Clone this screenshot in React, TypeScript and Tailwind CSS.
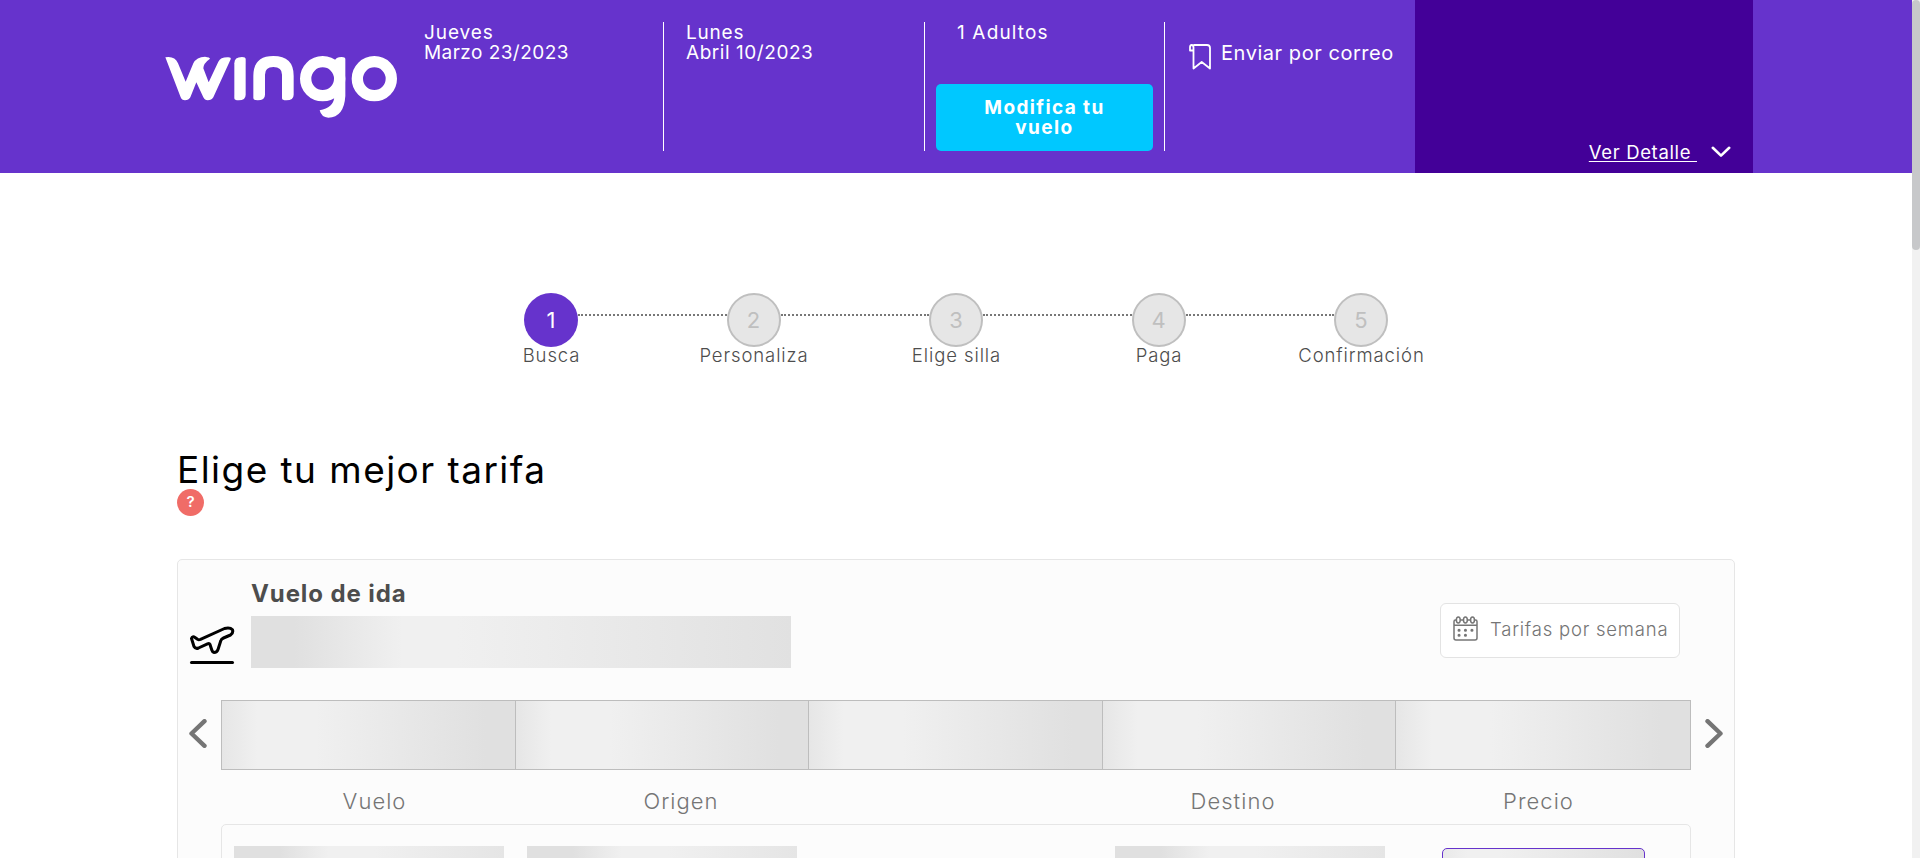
import React from "react";

const SKELETON = "bg-[linear-gradient(90deg,#e0e0e0_8%,#f0f0f0_28%,#f0f0f0_38%,#e1e1e1_100%)]";
const CELL = "bg-[linear-gradient(90deg,#e6e6e6_0%,#f0f0f0_12%,#f0f0f0_32%,#e0e0e0_90%)]";
const ROW = "bg-[linear-gradient(90deg,#e0e0e0_17%,#f0f0f0_35%,#f0f0f0_52%,#e5e5e5_100%)]";

function Logo() {
  return (
    <svg className="mt-[55px] h-16 w-[233px] shrink-0" viewBox="45 165 699 192" fill="#fff" role="img" aria-label="wingo">
      <path d="M46 172Q74 167 84 190L107 245L130 190Q140 170 165 170Q180 172 180 176Q160 190 160 205L176 247L205 185Q212 171 235 172Q244 172 242 178L190 292Q185 301 173 301Q164 301 160 292L139 247L121 292Q116 301 105 301Q95 301 92 292Z" />
      <path d="M253 190Q253 171 276 171Q287 171 287 177V284Q287 301 266 301Q253 301 253 295Z" />
      <path d="M310 227Q310 168 370 168Q431 168 431 227V284Q431 301 409 301Q396 301 396 295V224Q396 201 370 201Q345 201 345 224V284Q345 301 323 301Q310 301 310 295Z" />
      <circle cx="518" cy="236" r="51" fill="none" stroke="#fff" strokeWidth="34" />
      <path d="M553 184Q557 171 575 171Q586 171 586 177V288Q582 352 535 353Q514 352 509 331Q550 324 553 291Z" />
      <circle cx="673" cy="236" r="51" fill="none" stroke="#fff" strokeWidth="34" />
    </svg>
  );
}

function Chevron({ className, d }: { className: string; d: string }) {
  return (
    <svg className={className} viewBox="0 0 18 29" fill="none" stroke="#757575" strokeWidth="4.4" strokeLinecap="round" strokeLinejoin="round">
      <path d={d} />
    </svg>
  );
}

function Header() {
  return (
    <header className="flex h-[173px] bg-[#6633cc] pl-[165px] text-[19px] leading-5 text-white">
      <Logo />
      <div className="mt-[22px] h-[129px] w-[266px] border-r border-white pl-[26px] pt-px">
        <p className="tracking-[0.9px]">Jueves</p>
        <p className="tracking-[0.45px]">Marzo 23/2023</p>
      </div>
      <div className="mt-[22px] h-[129px] w-[261px] border-r border-white pl-[22px] pt-px">
        <p className="tracking-[0.8px]">Lunes</p>
        <p className="tracking-[0.55px]">Abril 10/2023</p>
      </div>
      <div className="mt-[22px] flex h-[129px] w-60 flex-col justify-between border-r border-white px-[11px] pt-px">
        <p className="pl-[21px] tracking-[1.15px]">1 Adultos</p>
        <button className="h-[67px] w-[217px] rounded-[5px] bg-[#00c8ff] px-10 font-bold leading-5 tracking-[1.4px]">Modifica tu vuelo</button>
      </div>
      <div className="flex w-[250px] items-start gap-[10px] pl-6 pt-[43px]">
        <svg className="mt-px h-[26px] w-[22px]" viewBox="0 0 22 26" fill="none" stroke="#fff" strokeWidth="1.8" strokeLinejoin="round">
          <path d="M4.5 1H18Q21 1 21 4V24.5L12.7 18L4.5 24.5V3.5Q4.5 1 2.7 1Q1 1 1 3.5V6.5H4" />
        </svg>
        <p className="whitespace-nowrap text-[20px] tracking-[0.55px]">Enviar por correo</p>
      </div>
      <div className="flex w-[338px] items-end justify-end gap-[14px] bg-[#430098] pb-[11px] pr-[22px] text-[18.5px]">
        <a className="whitespace-pre tracking-[0.65px] underline underline-offset-2">{"Ver Detalle "}</a>
        <svg className="mb-1 h-3 w-5" viewBox="0 0 20 12" fill="none" stroke="#fff" strokeWidth="2.6" strokeLinecap="round" strokeLinejoin="round">
          <path d="M1.8 1.8L10 9.6L18.2 1.8" />
        </svg>
      </div>
    </header>
  );
}

const steps = ["Busca", "Personaliza", "Elige silla", "Paga", "Confirmación"];

function Steps() {
  return (
    <ol className="ml-[524px] mt-[120px] flex h-[72px] w-[864px]">
      {steps.map((label, i) => (
        <React.Fragment key={label}>
          {i > 0 && <li className="mt-[21px] h-0 flex-1 border-t-2 border-dotted border-[#777]" />}
          <li className="flex w-[54px] flex-col items-center">
            <span
              className={
                "flex h-[54px] w-[54px] shrink-0 items-center justify-center rounded-full text-[22px] " +
                (i === 0 ? "bg-[#6633cc] text-white" : "border-2 border-[#bfbfbf] bg-[#e6e6e6] text-[#bfbfbf]")
              }
            >
              {i + 1}
            </span>
            <span className="-mt-px whitespace-nowrap pl-px text-[18.5px] font-light leading-[18px] tracking-[0.9px] text-[#4d4d4d]">{label}</span>
          </li>
        </React.Fragment>
      ))}
    </ol>
  );
}

function Plane() {
  return (
    <svg className="mt-[66px] h-[39px] w-[46px]" viewBox="0 0 46 39" fill="none" stroke="#000" strokeWidth="3" strokeLinecap="round" strokeLinejoin="round">
      <path d="M2.500 36.500H43.500" />
      <path d="M2.500 12.500Q3.500 9.800 6 11.500L8.500 13.300Q9.800 14 11.500 13.300L35.500 2.500Q41 1 43.500 3.800Q44.500 7 41.500 9L34.500 12Q32.200 13 31.700 15L29 23.500Q28 26.500 25 26.500Q23.500 26.300 22.800 24L21 18.500Q20.300 17 18.500 17.800L9.500 22Q6.500 23.200 5 20.500Z" />
    </svg>
  );
}

function Calendar() {
  return (
    <svg className="-mt-1 h-[25px] w-[25px]" viewBox="0 0 25 25" fill="none" stroke="#757575" strokeWidth="1.500">
      <path d="M3.500 4H2.500Q1 4 1 5.500V22Q1 24 3 24H22Q24 24 24 22V5.500Q24 4 22.500 4H21.500M7.300 4H10.500M14.500 4H17.500M1 9.200H24" />
      <ellipse cx="5.300" cy="4" rx="1.900" ry="3" />
      <ellipse cx="12.400" cy="4" rx="1.900" ry="3" />
      <ellipse cx="19.500" cy="4" rx="1.900" ry="3" />
      <path strokeWidth="3" strokeLinecap="round" d="M6 14.300h.1M12.400 14.300h.1M18.900 14.300h.1M6 19.200h.1M12.400 19.200h.1" />
    </svg>
  );
}

export default function App() {
  return (
    <div className="flex h-[858px] w-[1920px] overflow-hidden bg-white font-['Inter',sans-serif]">
      <div className="w-[1912px] shrink-0">
        <Header />
        <Steps />
        <main className="ml-[177px] mt-[85px] w-[1558px]">
          <h1 className="text-[37px] leading-10 tracking-[1.45px] text-black">Elige tu mejor tarifa</h1>
          <span className="-mt-px flex h-[27px] w-[27px] items-center justify-center rounded-full bg-[#f06c67] text-[15px] font-semibold text-white">?</span>
          <section className="mt-[43px] h-[340px] rounded-[5px] border border-[#e6e6e6] bg-[#fcfcfc]">
            <div className="flex h-[140px] pl-[11px]">
              <Plane />
              <div className="ml-4 w-[540px] pt-5">
                <h2 className="text-[24px] font-bold leading-7 tracking-[0.9px] text-[#4d4d4d]">Vuelo de ida</h2>
                <div className={"mt-2 h-[52px] " + SKELETON} />
              </div>
              <button className="ml-[649px] mt-[43px] flex h-[55px] w-60 items-center gap-3 rounded-[6px] border border-[#e3e3e3] bg-white pl-3 text-[18.5px] font-light text-[#757575]">
                <Calendar />
                <span className="-mt-0.5 whitespace-nowrap tracking-[0.78px]">Tarifas por semana</span>
              </button>
            </div>
            <div className="flex items-center pl-[11px]">
              <Chevron className="-mt-1 h-[29px] w-[18px]" d="M15.500 2.200L2.500 14.500L15.500 26.800" />
              <div className="ml-[14px] flex h-[70px] w-[1470px] divide-x divide-[#bdbdbd] border border-[#bdbdbd]">
                {[0, 1, 2, 3].map((n) => <div key={n} className={"w-[293.5px] " + CELL} />)}
                <div className={"flex-1 " + CELL} />
              </div>
              <Chevron className="-mt-1 ml-[14px] h-[29px] w-[18px]" d="M2.500 2.200L15.500 14.500L2.500 26.800" />
            </div>
            <div className="ml-[43px] mt-[19px] flex w-[1470px] text-center text-[22px] font-light leading-6 tracking-[1.05px] text-[#757575]">
              <span className="w-[307px]">Vuelo</span>
              <span className="w-[306px]">Origen</span>
              <span className="ml-[246px] w-[306px]">Destino</span>
              <span className="w-[305px]">Precio</span>
            </div>
            <div className="ml-[43px] mt-[11px] flex h-[90px] w-[1470px] rounded-[5px] border border-[#e6e6e6] pl-3">
              <div className={"mt-[21px] h-20 w-[270px] " + ROW} />
              <div className={"ml-[23px] mt-[21px] h-20 w-[270px] " + ROW} />
              <div className={"ml-[318px] mt-[21px] h-20 w-[270px] " + ROW} />
              <div className="ml-[57px] mt-[23px] h-20 w-[203px] rounded-[5px] border border-[#6633cc] bg-[linear-gradient(90deg,#e9e9e9_0%,#f0f0f0_12%,#f0f0f0_28%,#e0e0e0_100%)]" />
            </div>
          </section>
        </main>
      </div>
      <div className="h-full w-2 bg-[#f1f1f1]">
        <div className="h-[250px] w-2 rounded-full bg-[#c7c8ca]" />
      </div>
    </div>
  );
}
